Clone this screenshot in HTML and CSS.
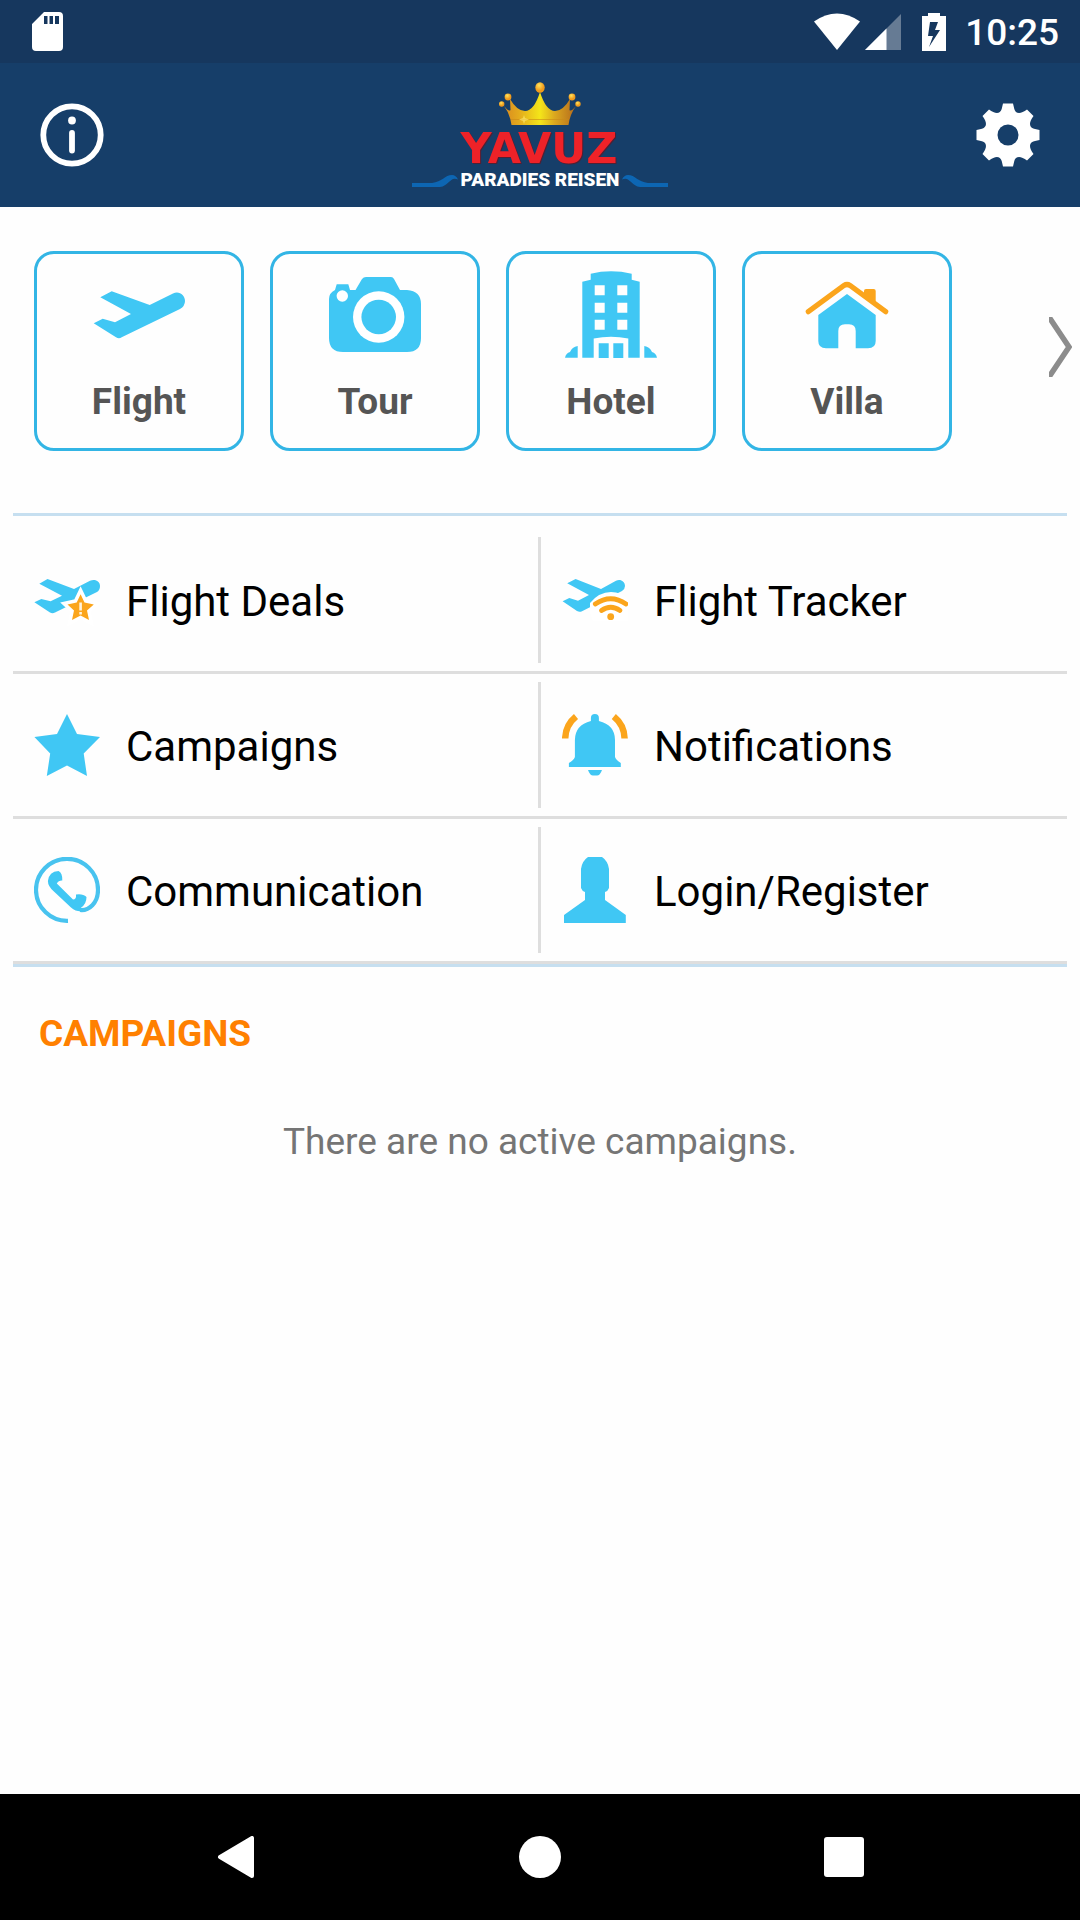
FILE: index.html
```html
<!DOCTYPE html>
<html lang="en">
<head>
<meta charset="utf-8">
<meta name="viewport" content="width=device-width, initial-scale=1">
<title>Yavuz Paradies Reisen</title>
<link rel="stylesheet" href="styles.css">
</head>
<body>
<div class="app">
  <div class="status">
    <svg class="status-card" width="31" height="39" viewBox="0 0 31 39" aria-hidden="true"><path fill="#fff" fill-rule="evenodd" d="M12 0H27Q31 0 31 4V35Q31 39 27 39H4Q0 39 0 35V12ZM12 4V12H15.500V4ZM17.500 4V12H21V4ZM23 4V12H27V4Z"/></svg>
    <div class="status-right">
      <svg width="46" height="38" viewBox="0 0 46 38" aria-hidden="true"><path fill="#fff" d="M0 8.500Q23-7.500 46 8.500L23 37Z"/></svg>
      <svg width="36" height="38" viewBox="0 0 36 38" aria-hidden="true"><path fill="#667b94" d="M36 1V37H0Z"/><path fill="#fff" d="M21.500 15.500V37H0Z"/></svg>
      <svg class="battery" width="24" height="38" viewBox="0 0 24 38" aria-hidden="true"><path fill="#fff" fill-rule="evenodd" d="M6 0H18V3H24V38H0V3H6ZM8 9L6 23H11L7 34L18 17H13L16 9Z"/></svg>
      <time class="clock">10:25</time>
    </div>
  </div>

  <header class="header">
    <button class="icon-button" type="button" aria-label="Information">
      <svg width="64" height="64" viewBox="0 0 64 64" fill="none" stroke="#fff" stroke-linecap="round"><circle cx="32" cy="32" r="28.700" stroke-width="5.800"/><path d="M32 30V47.500" stroke-width="5.800"/><circle cx="32" cy="17.500" r="3.900" fill="#fff" stroke="none"/></svg>
    </button>
    <svg class="logo" width="256" height="112" viewBox="0 0 256 112" role="img" aria-label="Yavuz Paradies Reisen">
      <defs>
        <linearGradient id="gold" x1="0" x2="1"><stop offset="0" stop-color="#d98b20"/><stop offset=".2" stop-color="#e3a91d"/><stop offset=".5" stop-color="#f4e519"/><stop offset=".7" stop-color="#dba81f"/><stop offset="1" stop-color="#b46a1c"/></linearGradient>
        <radialGradient id="ball" cx=".4" cy=".3"><stop offset="0" stop-color="#ffe45c"/><stop offset="1" stop-color="#f09a1c"/></radialGradient>
      </defs>
      <path fill="url(#gold)" d="M92 27Q97 33 98.500 31L98 20Q105 32 113 32Q122 32 128 13Q134 32 143 32Q151 32 158 20L157.500 31Q159 33 164 27Q158 35 156.500 46H99.500Q98 35 92 27Z"/>
      <path stroke="#c98a1a" stroke-width=".6" d="M99 40.500H157"/>
      <path fill="#ffef7a" opacity=".6" d="M112 36L113 39L117 40.500L113 42L112 45L111 42L107 40.500L111 39Z"/>
      <g fill="url(#ball)"><ellipse cx="128" cy="8.500" rx="4.700" ry="5.300"/><circle cx="96" cy="18" r="3.400"/><circle cx="160" cy="18" r="3.400"/><circle cx="89.700" cy="25" r="2.700"/><circle cx="166" cy="25" r="2.700"/></g>
      <path id="wave" fill="#0d66b3" d="M0 104H20C30 103 33 96 40 96Q44 96 46 100.500C38 97 37 107 28 108H0Z"/>
      <use href="#wave" transform="translate(256 0) scale(-1 1)"/>
      <text class="logo-name" x="127" y="84" text-anchor="middle">YAVUZ</text>
      <text class="logo-sub" x="128" y="107" text-anchor="middle">PARADIES REISEN</text>
    </svg>
    <button class="icon-button" type="button" aria-label="Settings">
      <svg width="64" height="64" viewBox="-32 -32 64 64"><g fill="#fff"><path id="cog" d="M0 0V-31.500H5L6.300-26C8-20.500 13-21 19-25.500L25.500-19C21-13 20.500-8 26-6.300L31.500-5V0Z"/><use href="#cog" transform="rotate(90)"/><use href="#cog" transform="rotate(180)"/><use href="#cog" transform="rotate(270)"/></g><circle r="10.500" fill="#163e69"/></svg>
    </button>
  </header>

  <main class="main">
    <nav class="services" aria-label="Services">
      <div class="cards">
        <a class="card" href="#flight">
          <svg width="92" height="92" viewBox="0 0 92 92"><path fill="#40c7f4" d="M.7 54.300L9.700 49.700L22 53.300L38 45L7.300 28.300L18.700 22.300L56.700 36L80 24.500C86 21.500 92 26 92 32Q92 37 87 40L28.700 68.300Q26 70 23 68.300Z"/></svg>
          <span class="card-label">Flight</span>
        </a>
        <a class="card" href="#tour">
          <svg width="92" height="92" viewBox="0 0 92 92"><path fill="#40c7f4" d="M6 21L7.700 15.300H19.300L21 21H26.500L33 10Q34.500 8 37 8H62Q64 8 65 10L71 21H78Q92 22 92 35V69Q92 83 78 83H14Q0 83 0 69V30Q0 24 6 21Z"/><g fill="#fff"><circle cx="13.300" cy="27" r="5.700"/><circle cx="49.700" cy="48" r="25.700"/></g><circle cx="49.700" cy="48" r="17.300" fill="#40c7f4"/></svg>
          <span class="card-label">Tour</span>
        </a>
        <a class="card" href="#hotel">
          <svg width="92" height="92" viewBox="0 0 92 92"><g fill="#40c7f4"><path fill-rule="evenodd" d="M17.300 12.700L25.700 10.700V4.700Q46 0 66.700 4.700V10.700L74.700 12.700V88.700H63.300V69.500Q46 66 28.700 69.500V88.700H17.300ZM29.700 16.300V26.300H39.700V16.300ZM52.300 16.300V26.300H62.300V16.300ZM29.700 33.700V43.700H39.700V33.700ZM52.300 33.700V43.700H62.300V33.700ZM29.700 50.700V60.700H39.700V50.700ZM52.300 50.700V60.700H62.300V50.700Z"/><path d="M33.700 74.300H43.700V89H33.700ZM48.300 74.300H58.300V89H48.300ZM0 88.700Q1 84 5 83Q7 78 12.700 77V88.700ZM92 88.700Q91 84 87 83Q85 78 79.300 77V88.700Z"/></g></svg>
          <span class="card-label">Hotel</span>
        </a>
        <a class="card" href="#villa">
          <svg width="92" height="92" viewBox="0 0 92 92"><path fill="#fba51c" d="M63 29V22Q63 20 65 20H72.700Q74.700 20 74.700 22V36Z"/><path fill="none" stroke="#fba51c" stroke-width="5.200" stroke-linecap="round" d="M7.300 42.700L43 16.500Q46 14.500 49 16.500L84.700 42.700"/><path fill="#40c7f4" d="M46 25L74.700 46V72Q74.700 79.300 67 79.300H54.700V62Q54.700 55.300 48 55.300H44Q37.300 55.300 37.300 62V79.300H25Q17.300 79.300 17.300 72V46Z"/></svg>
          <span class="card-label">Villa</span>
        </a>
      </div>
      <button class="next" type="button" aria-label="More services">
        <svg width="23" height="60" viewBox="0 0 23 60"><path fill="none" stroke="#8c8c8c" stroke-width="5.500" d="M0 0L20 30L0 60"/></svg>
      </button>
    </nav>

    <nav class="menu" aria-label="Menu">
      <div class="row">
        <a class="item" href="#deals">
          <svg width="66" height="66" viewBox="0 0 66 66"><path fill="#40c7f4" d="M.4 35.300L7.300 32L16.600 34.300L28 28.700L5.300 16.700L13.500 12L40 22L56 13.700C61 11.500 66 14 66 19Q66 23 63 25L21 45.500Q18.500 47 16 45.500Z"/><path fill="#fba51c" stroke="#fff" stroke-width="7" paint-order="stroke" d="M46.600 27.300L50.500 35.500L59.800 37.500L53 43.500L55 53L46.600 48.500L38 53L40 43.500L33.500 37.500L42.700 35.500Z"/><path stroke="#fff3dc" stroke-width="2.600" d="M46.600 35.500V43.500M46.600 45V47.500"/></svg>
          <span class="item-label">Flight Deals</span>
        </a>
        <a class="item" href="#tracker">
          <svg width="66" height="66" viewBox="0 0 66 66"><path fill="#40c7f4" d="M.6 34.300L7.300 31L16 33.700L27 28L5.200 16.300L13.600 12L39 22L54 13.700C58 11.500 63 14 63 19Q63 22 60 24L20 44.200Q17.500 45.500 15 44Z"/><path fill="#fff" d="M28 46V36Q37 25 49 25Q60 25 67 33V54H31Z"/><g fill="none" stroke="#fba51c" stroke-width="4.800" stroke-linecap="round"><path d="M33.300 37Q48.700 26.500 64 37"/><path d="M39.500 43.500Q48.700 37 58 43.500"/></g><circle cx="48.700" cy="49.700" r="3.400" fill="#fba51c"/></svg>
          <span class="item-label">Flight Tracker</span>
        </a>
      </div>
      <div class="row">
        <a class="item" href="#campaigns">
          <svg width="66" height="66" viewBox="0 0 66 66"><path fill="#40c7f4" d="M33 2L43 22L66 25L49.700 41.500L53 64L33 53.500L12.800 64L16.200 41.500L.4 25L23 22Z"/></svg>
          <span class="item-label">Campaigns</span>
        </a>
        <a class="item" href="#notifications">
          <svg width="66" height="66" viewBox="0 0 66 66"><path fill="#40c7f4" d="M28.900 9V6A4 4 0 0 1 36.900 6V9Q53 13 53 28V45Q54 48 58.800 51V55H6.900V51Q12 48 12.900 45V28Q13 13 28.900 9ZM26 58H40Q38 63.600 35 63.600H31Q28 63.600 26 58Z"/><path fill="none" stroke="#fba51c" stroke-width="6.500" d="M3.200 26.500Q3.500 13 14 4.500M62.600 26.500Q62.300 13 51.800 4.500"/></svg>
          <span class="item-label">Notifications</span>
        </a>
      </div>
      <div class="row">
        <a class="item" href="#communication">
          <svg width="66" height="66" viewBox="0 0 66 66"><path fill="none" stroke="#48c3ef" stroke-width="4.200" d="M34 63.800A31 31 0 1 1 64 33C64 46 55 54 46 53"/><path fill="#40c7f4" d="M24.500 14Q28.500 15.500 28.300 23.500Q24.500 23.300 22.800 26.500L39 42.500Q42.500 42.500 42 37.500Q49 36.500 52.500 40Q52.500 47 47 50.700L49 54Q43 55.500 37 50.500L19.400 34Q13.900 29 13.900 24Q15 14.500 24.500 14Z"/></svg>
          <span class="item-label">Communication</span>
        </a>
        <a class="item" href="#login">
          <svg width="66" height="66" viewBox="0 0 66 66"><path fill="#40c7f4" d="M26 0H40Q46 4 47 12V31Q46 34 43 35V43L63.800 58V66H2V58L23 43V35Q20 34 19 31V12Q20 4 26 0Z"/></svg>
          <span class="item-label">Login/Register</span>
        </a>
      </div>
    </nav>

    <section class="campaigns">
      <h2 class="campaigns-title">CAMPAIGNS</h2>
      <p class="campaigns-empty">There are no active campaigns.</p>
    </section>
  </main>

  <div class="system-nav">
    <button type="button" aria-label="Back"><svg width="42" height="42" viewBox="0 0 42 42"><path fill="#fff" stroke="#fff" stroke-width="4" stroke-linejoin="round" d="M37 2V40L5 21Z"/></svg></button>
    <button type="button" aria-label="Home"><svg width="42" height="42" viewBox="0 0 42 42"><circle cx="21" cy="21" r="21" fill="#fff"/></svg></button>
    <button type="button" aria-label="Recent apps"><svg width="42" height="42" viewBox="0 0 42 42"><rect x="1" y="1" width="40" height="40" rx="3" fill="#fff"/></svg></button>
  </div>
</div>
</body>
</html>
```

FILE: styles.css
```css
* { box-sizing: border-box; }

body {
  margin: 0;
  background: #fefefe;
  color: #000;
  font-family: Roboto, "Noto Sans", sans-serif;
  font-size: 37px;
  line-height: 44px;
}

svg { display: block; flex: none; }
a { color: inherit; text-decoration: none; }
button { padding: 0; border: 0; background: none; cursor: pointer; }

.app {
  display: flex;
  flex-direction: column;
  min-height: 100vh;
}

/* Status bar */
.status {
  display: flex;
  align-items: center;
  justify-content: space-between;
  height: 63px;
  padding: 0 21px 0 32px;
  background: #16375e;
  color: #fff;
}
.status-right { display: flex; align-items: center; gap: 5px; }
.battery { margin: 0 14px 0 16px; }
.clock { padding-top: 3px; font-weight: 500; }

/* Header */
.header {
  display: flex;
  align-items: center;
  justify-content: space-between;
  height: 144px;
  padding: 0 40px;
  background: #163e69;
}
.logo-name {
  font: bold 43px "DejaVu Sans", sans-serif;
  fill: #ee2228;
  filter: drop-shadow(1px 1px 0 #4f2035);
}
.logo-sub {
  font: 900 19px Roboto, sans-serif;
  fill: #fff;
}

/* Services */
.main { flex: 1; }
.services {
  display: flex;
  align-items: center;
  justify-content: space-between;
  padding: 44px 8px 62px 34px;
}
.cards { display: flex; gap: 26px; }
.card {
  display: flex;
  flex-direction: column;
  align-items: center;
  gap: 19px;
  width: 210px;
  padding: 15px 0 24px;
  border: 3px solid #33b5e5;
  border-radius: 20px;
}
.card-label { color: #555; font-weight: 700; }
.next { padding-bottom: 8px; }

/* Menu */
.menu {
  margin: 0 13px;
  padding-top: 13px;
  border-top: 3px solid #c6dff0;
  border-bottom: 3px solid #c6dff0;
  font-size: 42px;
  line-height: 50px;
}
.row {
  display: grid;
  grid-template-columns: 1fr 1fr;
  padding: 8px 0;
  border-bottom: 3px solid #dedede;
}
.item {
  display: flex;
  align-items: center;
  gap: 26px;
  min-height: 126px;
  padding-left: 21px;
}
.item + .item {
  margin-left: -2px;
  border-left: 3px solid #dedede;
}
.item-label { padding-top: 4px; }

/* Campaigns */
.campaigns { padding: 45px 39px; }
.campaigns-title {
  margin: 0 0 64px;
  color: #ff8000;
  font-size: 37px;
  font-weight: 700;
}
.campaigns-empty {
  margin: 0;
  color: #757575;
  text-align: center;
}

/* System navigation */
.system-nav {
  display: grid;
  grid-template-columns: repeat(3, 1fr);
  align-items: center;
  justify-items: center;
  height: 126px;
  padding: 0 84px;
  background: #000;
}
```
